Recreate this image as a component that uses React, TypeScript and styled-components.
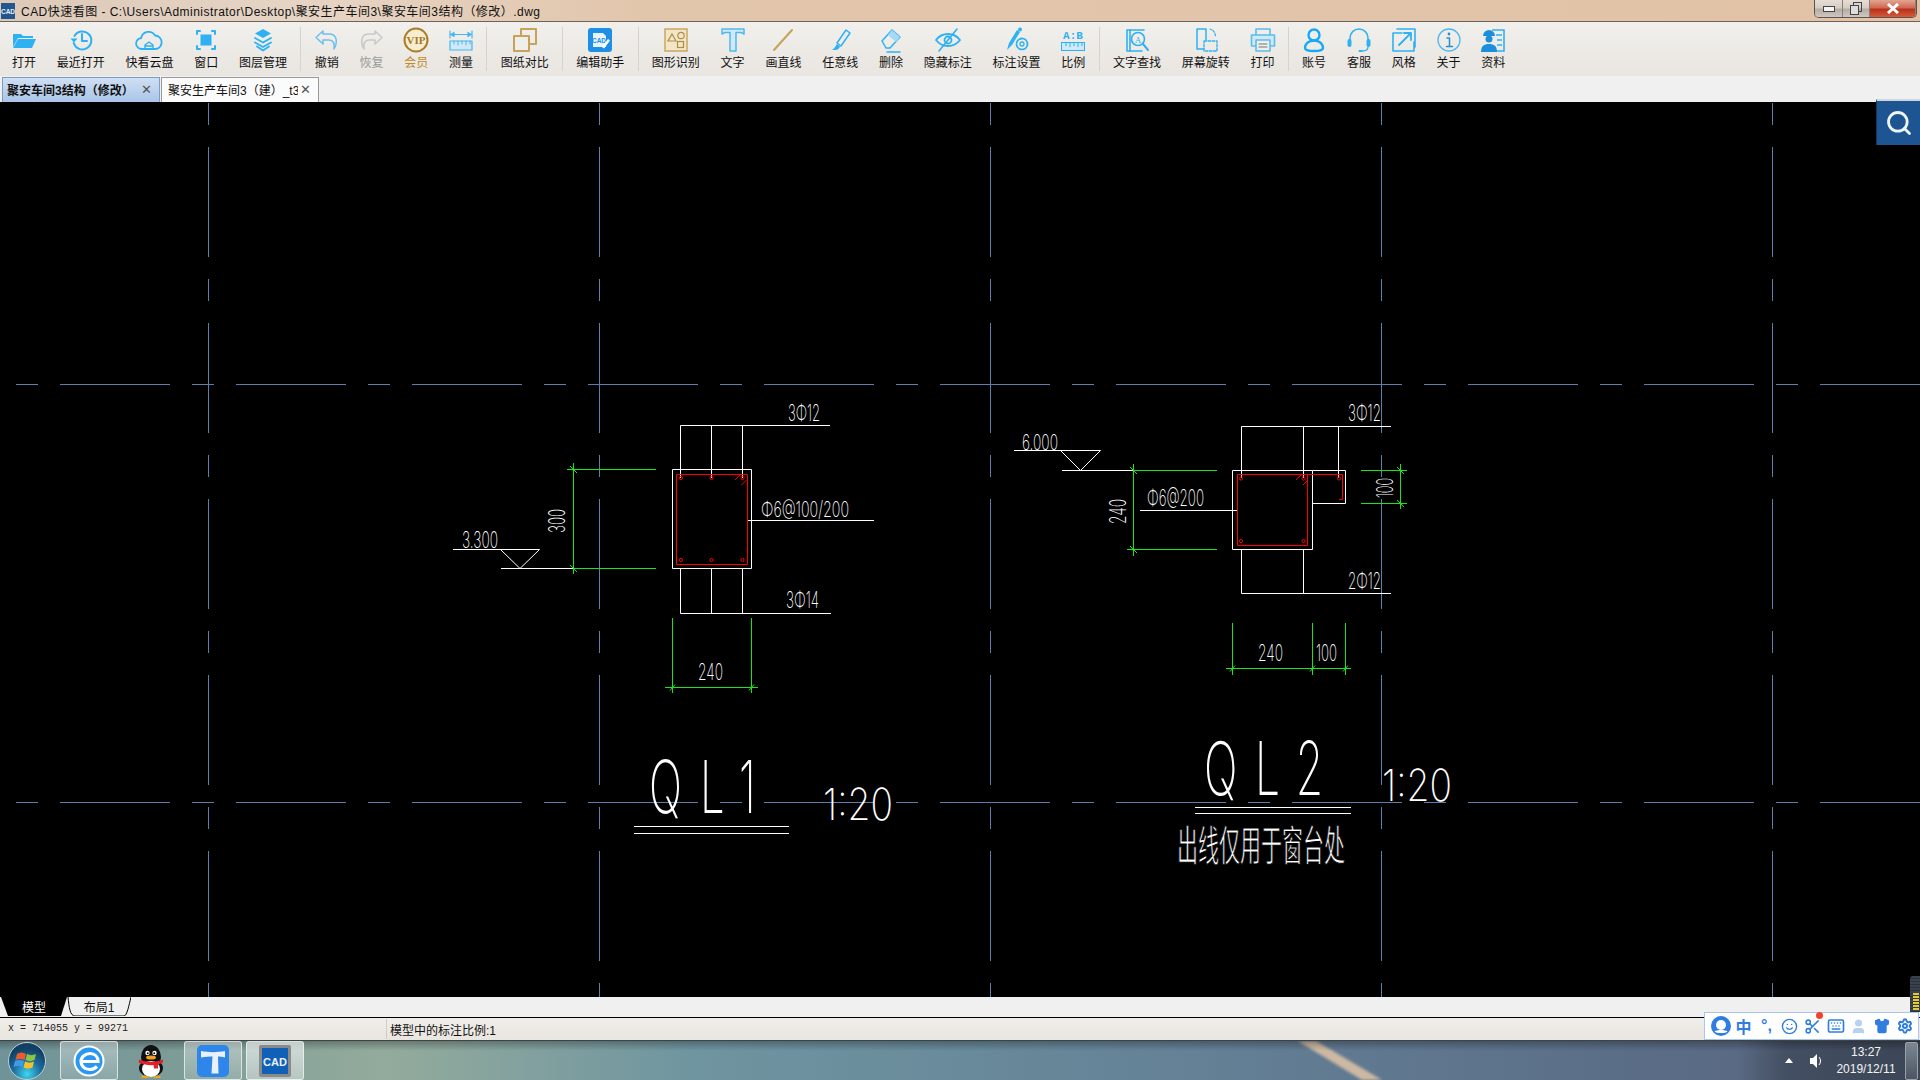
import React from "react";
import styled, { createGlobalStyle } from "styled-components";
import { Keyboard, Scissors, Search, Settings, Shirt, Smile, User } from "lucide-react";

const UI_FONT = `"Liberation Sans", "Noto Sans CJK SC", sans-serif`;
const BLUE = "#2db1f3";
const GOLD = "#c6a25a";

const Global = createGlobalStyle`
  html, body { margin: 0; padding: 0; background: #000; }
  * { box-sizing: border-box; }
`;

const Screen = styled.div`
  position: relative;
  width: 1920px;
  height: 1080px;
  overflow: hidden;
  display: flex;
  flex-direction: column;
  font-family: ${UI_FONT};
`;

const TitleBar = styled.header`
  height: 22px;
  flex: none;
  display: flex;
  align-items: flex-start;
  justify-content: space-between;
  border-bottom: 1px solid #6e635a;
  background: linear-gradient(90deg, #dcc9b8 0, #e6d4c4 300px, #e2c6ac 640px, #e1c2a7 100%);
`;
const TitleLeft = styled.div`
  display: flex;
  align-items: center;
  gap: 6px;
  height: 21px;
  padding-left: 1px;
  font-size: 12px;
  color: #111;
  white-space: nowrap;
`;
const TitleText = styled.span`
  letter-spacing: 0.47px;
`;
const WindowControls = styled.div`
  display: flex;
  height: 18px;
  margin-right: 3px;
  border: 1px solid #5d534c;
  border-top: none;
  border-radius: 0 0 5px 5px;
  overflow: hidden;
`;
const WinButton = styled.div<{ $w: number; $close?: boolean }>`
  width: ${(p) => p.$w}px;
  display: flex;
  align-items: center;
  justify-content: center;
  border-right: 1px solid #8b8078;
  background: ${(p) =>
    p.$close
      ? "linear-gradient(180deg,#e3a594 0,#cf6a52 45%,#b8321c 55%,#d65a3c 100%)"
      : "linear-gradient(180deg,#e8ddd4 0,#d8cdc4 45%,#b4aca6 55%,#cfc8c0 100%)"};
`;

const Toolbar = styled.nav`
  height: 54px;
  flex: none;
  display: flex;
  align-items: flex-start;
  padding: 4px 0 0 1.5px;
  background: linear-gradient(180deg, #f1f0ec 0, #e9e5e0 100%);
`;
const ToolButton = styled.div<{ $muted?: boolean; $gold?: boolean }>`
  display: flex;
  flex-direction: column;
  align-items: center;
  padding: 0 10.4px;
  font-size: 12px;
  line-height: 16px;
  white-space: nowrap;
  color: ${(p) => (p.$muted ? "#9a9a9a" : p.$gold ? "#c08a2c" : "#111")};
  svg { display: block; margin: 0 -3px 1px; }
`;
const ToolSep = styled.div`
  width: 1px;
  height: 44px;
  margin: 1px 2.9px 0;
  flex: none;
  background: #d6d3cf;
`;

const TabStrip = styled.div`
  height: 26px;
  flex: none;
  display: flex;
  align-items: flex-end;
  gap: 1px;
  padding-left: 2px;
  background: #f0f0f0;
`;
const DocTab = styled.div<{ $active?: boolean }>`
  width: 158px;
  height: 25px;
  display: flex;
  align-items: center;
  justify-content: space-between;
  padding: 0 7px 2px ${(p) => (p.$active ? 4 : 6)}px;
  font-size: 12px;
  font-weight: ${(p) => (p.$active ? 700 : 400)};
  color: #111;
  border: 1px solid ${(p) => (p.$active ? "#7b9cc6" : "#9a9a9a")};
  border-bottom: none;
  background: ${(p) => (p.$active ? "linear-gradient(180deg,#cfdff2,#a9c5e8)" : "#fbfbfb")};
`;
const DocTitle = styled.span`
  width: 130px;
  overflow: hidden;
  white-space: nowrap;
`;
const TabClose = styled.span`
  font-size: 13px;
  font-weight: 400;
  color: #555;
`;

const Canvas = styled.main`
  position: relative;
  flex: 1;
  min-height: 0;
  background: #000;
  svg.drawing { display: block; width: 1920px; height: 895px; }
`;
const SearchButton = styled.div`
  position: absolute;
  top: -3px;
  right: 0;
  width: 44px;
  height: 46px;
  display: flex;
  align-items: center;
  justify-content: center;
  border-top: 2px solid #cfd6dd;
  border-left: 1px solid #14355c;
  background: #1c5591;
  color: #eef4fa;
`;
const LevelMeter = styled.div`
  position: absolute;
  right: 0;
  bottom: -15px;
  width: 10px;
  height: 36px;
  border-radius: 3px 0 0 0;
  background: repeating-linear-gradient(180deg, #39424f 0 2px, #2a313c 2px 3px);
  &::after {
    content: "";
    position: absolute;
    left: 3px;
    right: 1px;
    bottom: 2px;
    height: 17px;
    background: repeating-linear-gradient(180deg, #e2c936 0 2px, #3a3a2a 2px 3px);
  }
`;
const CadLabel = styled.text<{ $weight?: number }>`
  fill: #fff;
  font-family: "Inter", "Noto Sans CJK SC", sans-serif;
  font-weight: ${(p) => p.$weight ?? 200};
`;
const CadHanzi = styled.text`
  fill: #fff;
  stroke: #000;
  stroke-width: 1px;
  font-family: "Noto Sans CJK SC", sans-serif;
`;

const LayoutStrip = styled.div`
  height: 21px;
  flex: none;
  display: flex;
  padding-left: 1px;
  background: #f0f0f0;
  border-bottom: 1px solid #000;
`;
const LayoutTab = styled.div<{ $w: number; $dark?: boolean }>`
  position: relative;
  width: ${(p) => p.$w}px;
  height: 19px;
  display: flex;
  align-items: center;
  justify-content: center;
  font-size: 12px;
  color: ${(p) => (p.$dark ? "#fff" : "#111")};
  svg { position: absolute; inset: 0; }
  span { position: relative; }
`;

const StatusBar = styled.footer`
  height: 22px;
  flex: none;
  display: flex;
  align-items: center;
  background: linear-gradient(180deg, #f0eeea, #e9e5e0);
`;
const Coords = styled.div`
  width: 387px;
  height: 20px;
  line-height: 20px;
  padding-left: 8px;
  border-right: 1px solid #cfccc8;
  font-family: "Liberation Mono", monospace;
  font-size: 10px;
  color: #222;
`;
const ScaleNote = styled.div`
  padding-left: 3px;
  font-size: 12px;
  color: #111;
`;

const Taskbar = styled.div`
  position: relative;
  height: 40px;
  flex: none;
  display: flex;
  align-items: stretch;
  border-top: 1px solid #3d4347;
  color: #fff;
`;
const Wallpaper = styled.svg`
  position: absolute;
  inset: 0;
  width: 100%;
  height: 100%;
`;
const StartOrb = styled.div`
  position: relative;
  width: 60px;
  display: flex;
  align-items: center;
  padding-left: 7px;
`;
const TaskItem = styled.div<{ $w: number; $state?: "plain" | "open" | "active" }>`
  position: relative;
  width: ${(p) => p.$w}px;
  margin-left: ${(p) => (p.$state === "active" ? 4 : 0)}px;
  display: flex;
  align-items: center;
  justify-content: center;
  border-radius: 3px;
  border: ${(p) => (p.$state && p.$state !== "plain" ? "1px solid rgba(235,245,245,.75)" : "none")};
  background: ${(p) =>
    p.$state === "active"
      ? "linear-gradient(180deg,rgba(255,255,255,.62),rgba(255,255,255,.38))"
      : p.$state === "open"
        ? "linear-gradient(180deg,rgba(255,255,255,.38),rgba(255,255,255,.14))"
        : "none"};
`;
const Tray = styled.div`
  position: relative;
  margin-left: auto;
  display: flex;
  align-items: center;
`;
const TrayArrow = styled.div`
  width: 0;
  height: 0;
  margin-right: 17px;
  border-left: 4px solid transparent;
  border-right: 4px solid transparent;
  border-bottom: 5px solid #fff;
`;
const Clock = styled.div`
  width: 72px;
  margin: 0 3px 0 8px;
  text-align: center;
  font-size: 12px;
  line-height: 17px;
  color: #f4f4f4;
`;
const ShowDesktop = styled.div`
  width: 13px;
  height: 38px;
  margin-right: 2px;
  border: 1px solid #9aa0a6;
  border-radius: 2px;
  background: linear-gradient(180deg, #7c8794, #4b5563);
`;
const ImeBar = styled.div`
  position: absolute;
  right: 1px;
  bottom: 40px;
  width: 215px;
  height: 28px;
  display: flex;
  align-items: center;
  padding-left: 4px;
  background: #fff;
  border: 1px solid #a9c6f0;
  color: #2f7de1;
`;
const ImeItem = styled.div<{ $light?: boolean }>`
  position: relative;
  width: 23px;
  display: flex;
  align-items: center;
  justify-content: center;
  font-size: 16px;
  font-weight: 700;
  color: ${(p) => (p.$light ? "#b9d2f3" : "#2f7de1")};
`;
const RedDot = styled.span`
  position: absolute;
  top: -6px;
  right: 1px;
  width: 7px;
  height: 7px;
  border-radius: 50%;
  background: #f4432c;
`;

/* ---------- toolbar icons ---------- */
const Ic: React.FC<{ children: React.ReactNode; c?: string }> = ({ children, c = BLUE }) => (
  <svg width="30" height="28" viewBox="0 0 30 28" fill="none" stroke={c} strokeWidth="1.6" strokeLinecap="round" strokeLinejoin="round">
    {children}
  </svg>
);

const icons: Record<string, React.ReactNode> = {
  open: (
    <Ic>
      <path d="M4 21V8h8l2 2h10v2H9z" fill={BLUE} stroke="none" />
      <path d="M9 13h18l-4 9H4z" fill={BLUE} stroke="none" />
    </Ic>
  ),
  recent: (
    <Ic>
      <path d="M8.5 10a9 9 0 1 1-.8 7" strokeWidth="2" />
      <path d="M4.5 12.5h7l-3.5 4z" fill={BLUE} stroke="none" />
      <path d="M16 8v7h5" strokeWidth="2" />
    </Ic>
  ),
  cloud: (
    <Ic>
      <path d="M8 23a5.500 5.500 0 0 1-.8-11A7.500 7.500 0 0 1 21 9.500 6.800 6.800 0 0 1 22 23z" strokeWidth="1.8" />
      <path d="M11 23v-4l4-3 4 3v4M11 20h8" strokeWidth="1.4" />
    </Ic>
  ),
  window: (
    <Ic>
      <rect x="9.500" y="8.500" width="11" height="11" fill={BLUE} stroke="none" />
      <path d="M6 8V5h3M21 5h3v3M24 20v3h-3M9 23H6v-3" strokeWidth="2" />
    </Ic>
  ),
  layers: (
    <Ic>
      <path d="M15 3l8 4.500-8 4.500-8-4.500z" fill={BLUE} stroke="none" />
      <path d="M7 12l8 4.500 8-4.500M7 16.500l8 4.500 8-4.500M9 20.500l6 4 6-4" strokeWidth="1.8" />
    </Ic>
  ),
  undo: (
    <Ic c="#6cc0ee">
      <path d="M11 5L4 11.500l7 6.500v-4h6c4 0 6 3 5 9 4-7 3-15-5-15h-6z" strokeWidth="1.5" />
    </Ic>
  ),
  redo: (
    <Ic c="#c8c8c8">
      <path d="M19 5l7 6.500-7 6.500v-4h-6c-4 0-6 3-5 9-4-7-3-15 5-15h6z" strokeWidth="1.5" />
    </Ic>
  ),
  vip: (
    <svg width="30" height="28" viewBox="0 0 30 28">
      <circle cx="15" cy="14" r="11.500" fill="#f7eed2" stroke="#ab7d27" strokeWidth="2" />
      <text x="15" y="18" textAnchor="middle" fontFamily="Liberation Serif, serif" fontWeight="700" fontSize="11" fill="#a9782a">
        VIP
      </text>
    </svg>
  ),
  measure: (
    <Ic c="#46b6f0">
      <path d="M4 5v7M26 5v7M5 8.500h20M5 8.500l3-2v4zM25 8.500l-3-2v4z" strokeWidth="1.2" />
      <rect x="4" y="15" width="22" height="9" strokeWidth="1.2" fill="#cfe9f8" />
      <path d="M8 15v3M12 15v4M16 15v3M20 15v4M24 15v3" strokeWidth="1" />
    </Ic>
  ),
  compare: (
    <Ic c={GOLD}>
      <rect x="11" y="3" width="15" height="15" strokeWidth="2" />
      <rect x="4" y="10" width="15" height="15" strokeWidth="2" fill="#f0eeea" />
    </Ic>
  ),
  editor: (
    <svg width="30" height="28" viewBox="0 0 30 28">
      <rect x="3" y="2" width="24" height="24" rx="3" fill="#1e8fe6" />
      <path d="M8 7h10l3 3v11H8z" fill="#e8f4fd" />
      <text x="14" y="17" textAnchor="middle" fontFamily="Liberation Sans, sans-serif" fontSize="6.500" fontWeight="700" fill="#1e8fe6">
        CAD
      </text>
      <path d="M17 21l6-8 2 1.500-6 8z" fill="#fff" />
    </svg>
  ),
  shapes: (
    <svg width="30" height="28" viewBox="0 0 30 28" fill="none" stroke="#b08c46" strokeWidth="1.2">
      <rect x="4" y="3" width="22" height="22" fill="#f2e6c8" stroke="#c9a85f" strokeWidth="1.500" />
      <path d="M11 8l4 7H7z" />
      <circle cx="20" cy="9.500" r="3.200" />
      <rect x="16.500" y="15.500" width="6" height="6" />
    </svg>
  ),
  text: (
    <Ic c="#4fb9ee">
      <path d="M4 3h22v5l-3-1.500h-5V25h-6V6.500H7L4 8z" strokeWidth="1.500" fill="#cfe9f8" />
    </Ic>
  ),
  line: (
    <Ic c={GOLD}>
      <path d="M6 24L24 4" strokeWidth="2" />
    </Ic>
  ),
  pen: (
    <Ic>
      <path d="M12 17l9-13 4 3-9 13z" strokeWidth="1.500" />
      <path d="M12 18l3 2.500c-1 3-4 4-8 3.500 2-1 3-3 5-6z" fill={BLUE} stroke="none" />
    </Ic>
  ),
  eraser: (
    <Ic>
      <path d="M6 15L16 4l8 7-10 11H10z" strokeWidth="1.500" />
      <path d="M12 9l8 7 4-5-8-7z" fill="#a5d9f6" stroke="none" />
      <path d="M11 26h13" strokeWidth="1.500" />
    </Ic>
  ),
  hide: (
    <Ic>
      <path d="M3 14c6-8 18-8 24 0-6 8-18 8-24 0z" strokeWidth="1.800" />
      <circle cx="15" cy="14" r="3.500" strokeWidth="1.800" />
      <path d="M6 25L24 3" strokeWidth="1.600" />
    </Ic>
  ),
  markset: (
    <Ic>
      <path d="M5 24l2-7 8-13 3 2-8 13z" fill={BLUE} stroke="none" />
      <circle cx="18" cy="3.500" r="2" fill={BLUE} stroke="none" />
      <circle cx="20" cy="18" r="5.500" strokeWidth="1.800" strokeDasharray="3 1.500" />
      <circle cx="20" cy="18" r="2" strokeWidth="1.300" />
    </Ic>
  ),
  ratio: (
    <svg width="30" height="28" viewBox="0 0 30 28" fill="none">
      <text x="15" y="13" textAnchor="middle" fontFamily="Liberation Mono, monospace" fontWeight="700" fontSize="11" fill={BLUE}>
        A:B
      </text>
      <rect x="3.500" y="16.500" width="23" height="8" stroke={BLUE} fill="#cfe9f8" />
      <path d="M8 17v3M12 17v4M16 17v3M20 17v4M24 17v3" stroke={BLUE} />
    </svg>
  ),
  findtext: (
    <Ic>
      <path d="M22 4H5v21h15" strokeWidth="1.600" />
      <path d="M8 4v21" strokeWidth="1.600" />
      <circle cx="16" cy="13" r="6.500" strokeWidth="1.600" />
      <path d="M21 18l5 6" strokeWidth="2" />
      <text x="16" y="16.500" textAnchor="middle" fontFamily="Liberation Serif, serif" fontSize="9" fill={BLUE} stroke="none">
        A
      </text>
    </Ic>
  ),
  rotate: (
    <Ic>
      <path d="M15 14V3H6v20h7" strokeWidth="1.500" />
      <path d="M13 15h13v10H13z" strokeWidth="1.300" strokeDasharray="2.500 1.500" />
      <path d="M19 3c3 1 5 3 5.500 7" strokeWidth="1.200" strokeDasharray="2 1.500" />
    </Ic>
  ),
  print: (
    <Ic c="#5bbcee">
      <path d="M8 9V3h14v6" strokeWidth="1.600" />
      <path d="M8 20H3.500V9h23v11H22" strokeWidth="1.600" fill="#cfe9f8" />
      <rect x="8" y="14" width="14" height="11" fill="#f0eeea" strokeWidth="1.600" />
      <path d="M11 18h8M11 21h8" strokeWidth="1.200" stroke="#777" />
    </Ic>
  ),
  account: (
    <Ic c="#16a9f7">
      <circle cx="15" cy="9" r="5.500" strokeWidth="2.400" />
      <path d="M15 14.500c-6 0-9 4-9 7.500 0 2 2 3 9 3s9-1 9-3c0-3.500-3-7.500-9-7.500z" strokeWidth="2.400" />
    </Ic>
  ),
  support: (
    <Ic>
      <path d="M6 14v-2a9 9 0 0 1 18 0v2" strokeWidth="1.500" />
      <rect x="3.500" y="13" width="4" height="8" rx="2" fill={BLUE} stroke="none" />
      <rect x="22.500" y="13" width="4" height="8" rx="2" fill={BLUE} stroke="none" />
      <path d="M24 21c0 3-3 4-6 4" strokeWidth="1.300" />
      <rect x="14.500" y="24" width="4" height="2" rx="1" fill={BLUE} stroke="none" />
    </Ic>
  ),
  style: (
    <Ic>
      <path d="M4 7h9M4 7v18h21v-9M8 3h18v18" strokeWidth="1.600" />
      <path d="M10 19L22 7M15 7h7v7" strokeWidth="1.800" />
    </Ic>
  ),
  about: (
    <Ic c="#4fb9ee">
      <circle cx="15" cy="14" r="11" strokeWidth="1.300" />
      <circle cx="15" cy="8" r="1.400" fill="#2a8fd0" stroke="none" />
      <path d="M13 12h2.500v8M12.500 20.500h6" strokeWidth="1.500" stroke="#2a8fd0" />
    </Ic>
  ),
  docs: (
    <svg width="30" height="28" viewBox="0 0 30 28" fill="none">
      <path d="M14 4h12v21H16" stroke={BLUE} strokeWidth="1.600" />
      <path d="M18 9h6M19 14h5M19 19h5" stroke={BLUE} strokeWidth="1.500" />
      <path d="M5 10a6 6 0 0 1 12 0z" fill="#1c8fdc" />
      <circle cx="11" cy="13" r="3.500" fill="#1c8fdc" />
      <path d="M3 26c0-6 3-8 8-8s8 2 8 8z" fill="#1c8fdc" />
    </svg>
  ),
};

type ToolDef = { id: string; label: string; muted?: boolean; gold?: boolean } | "sep";
const tools: ToolDef[] = [
  { id: "open", label: "打开" },
  { id: "recent", label: "最近打开" },
  { id: "cloud", label: "快看云盘" },
  { id: "window", label: "窗口" },
  { id: "layers", label: "图层管理" },
  "sep",
  { id: "undo", label: "撤销" },
  { id: "redo", label: "恢复", muted: true },
  { id: "vip", label: "会员", gold: true },
  { id: "measure", label: "测量" },
  "sep",
  { id: "compare", label: "图纸对比" },
  "sep",
  { id: "editor", label: "编辑助手" },
  "sep",
  { id: "shapes", label: "图形识别" },
  { id: "text", label: "文字" },
  { id: "line", label: "画直线" },
  { id: "pen", label: "任意线" },
  { id: "eraser", label: "删除" },
  { id: "hide", label: "隐藏标注" },
  { id: "markset", label: "标注设置" },
  { id: "ratio", label: "比例" },
  "sep",
  { id: "findtext", label: "文字查找" },
  { id: "rotate", label: "屏幕旋转" },
  { id: "print", label: "打印" },
  "sep",
  { id: "account", label: "账号" },
  { id: "support", label: "客服" },
  { id: "style", label: "风格" },
  { id: "about", label: "关于" },
  { id: "docs", label: "资料" },
];

/* ---------- CAD drawing ---------- */
const CAP = 0.727;
const Cad: React.FC<{ x0: number; x1: number; top: number; bottom: number; weight?: number; children: string }> = ({ x0, x1, top, bottom, weight, children }) => (
  <CadLabel x={x0} y={bottom} $weight={weight} fontSize={(bottom - top) / CAP} textLength={x1 - x0} lengthAdjust="spacingAndGlyphs">
    {children}
  </CadLabel>
);
const CadUp: React.FC<{ left: number; right: number; top: number; bottom: number; children: string }> = ({ left, right, top, bottom, children }) => (
  <CadLabel
    x={right}
    y={bottom}
    transform={`rotate(-90 ${right} ${bottom})`}
    fontSize={(right - left) / CAP}
    textLength={bottom - top}
    lengthAdjust="spacingAndGlyphs"
  >
    {children}
  </CadLabel>
);
const CadTitle: React.FC<{ x: number; y: number; size: number; xs: string; children: string }> = ({ x, y, size, xs, children }) => (
  <CadLabel $weight={200} transform={`translate(${x} ${y}) scale(.6 1)`} x={xs} y={0} fontSize={size}>
    {children}
  </CadLabel>
);

const WHITE_PATH = `
M672.5 469.5H751.5V568.5H672.5Z M680.5 478V425.5H830 M711.5 425.5V478 M742.5 425.5V478
M680.5 568V613.5H831 M711.5 568V613.5 M742.5 568V613.5 M747 520.5H874
M453 549.5H539.5L520 568.5L500.5 549.5 M501 568.5H573
M1232.5 470.5H1312.5V549.5H1232.5Z M1312.5 470.5H1345.5V503.5H1312.5
M1241.5 478V426.5H1391 M1303.5 426.5V478 M1338.5 426.5V478
M1241.5 549V593.5H1391 M1303.5 549V593.5 M1140 510.5H1237
M1014 450.5H1100.5L1080.5 470.5L1060.5 450.5 M1062 470.5H1133
M634 826.5H789 M634 833.5H789 M1195 807.5H1351 M1195 813.5H1351`;
const GREEN_PATH = `
M573.5 463V574 M567 469.5H656 M573 568.5H656 M672.5 618V693 M751.5 618V693 M665 687.5H758
M570 466L577 473 M570 565L577 572 M670 690.5L675 684.5 M749 690.5L754 684.5
M1133.5 464V556 M1133 470.5H1217 M1127 549.5H1217 M1400.5 464V509 M1361 470.5H1407 M1361 503.5H1407
M1232.5 623V675 M1312.5 623V675 M1345.5 623V675 M1226 668.5H1351
M1130 467L1137 474 M1130 546L1137 553 M1397 467L1404 474 M1397 500L1404 507
M1230 671.5L1235 665.5 M1310 671.5L1315 665.5 M1343 671.5L1348 665.5`;
const RED_PATH = `
M676.5 474.5H747.5V564.5H676.5Z M735 480L740 475 M741.5 485L746.5 480
M1237.5 474.5H1307.5V545.5H1237.5Z M1307.5 474.5H1342.5V499.5H1339 M1296 480L1301 475 M1303 485L1308 480`;
const BARS: [number, number][] = [
  [681, 478], [711.5, 478], [742.5, 478], [681, 560], [711.5, 560], [742.5, 560],
  [1241, 478.5], [1303.5, 478.5], [1339, 478.5], [1241, 541], [1303.5, 541],
];

const Drawing: React.FC = () => (
  <svg className="drawing" viewBox="0 102 1920 895">
    <g stroke="#5b80ae" strokeWidth="1" strokeDasharray="22 22 110 22" shapeRendering="crispEdges">
      {[208.5, 599.5, 990.5, 1381.5, 1772.5].map((x) => (
        <line key={x} x1={x} y1={103} x2={x} y2={997} />
      ))}
      {[384.5, 802.5].map((y) => (
        <line key={y} x1={16} y1={y} x2={1920} y2={y} />
      ))}
    </g>
    <path d={GREEN_PATH} stroke="#19e619" fill="none" />
    <path d={WHITE_PATH} stroke="#fff" fill="none" />
    <path d={RED_PATH} stroke="#ff0000" fill="none" />
    {BARS.map(([x, y]) => (
      <circle key={`${x}-${y}`} cx={x} cy={y} r="1.600" stroke="#ff0000" fill="none" />
    ))}

    <Cad x0={788} x1={820} top={404} bottom={421}>3Φ12</Cad>
    <Cad x0={761} x1={849} top={501} bottom={517}>Φ6@100/200</Cad>
    <Cad x0={786} x1={819} top={591} bottom={608}>3Φ14</Cad>
    <Cad x0={462} x1={498} top={531} bottom={548}>3.300</Cad>
    <Cad x0={698} x1={723} top={663} bottom={680}>240</Cad>
    <CadUp left={548} right={565} top={509} bottom={533}>300</CadUp>

    <Cad x0={1348} x1={1381} top={404} bottom={421}>3Φ12</Cad>
    <Cad x0={1348} x1={1381} top={572} bottom={589}>2Φ12</Cad>
    <Cad x0={1147} x1={1204} top={489} bottom={506}>Φ6@200</Cad>
    <Cad x0={1022} x1={1058} top={434} bottom={450}>6.000</Cad>
    <Cad x0={1258} x1={1283} top={644} bottom={661}>240</Cad>
    <Cad x0={1316} x1={1337} top={644} bottom={661}>100</Cad>
    <CadUp left={1109} right={1126} top={499} bottom={524}>240</CadUp>
    <CadUp left={1376} right={1393} top={478} bottom={498}>100</CadUp>

    <CadTitle x={649} y={813} size={73} xs="0 85 150">QL1</CadTitle>
    <Cad x0={823} x1={893} top={788} bottom={820} weight={200}>1:20</Cad>

    <CadTitle x={1204} y={795} size={74} xs="0 85 153">QL2</CadTitle>
    <Cad x0={1382} x1={1452} top={769} bottom={801} weight={200}>1:20</Cad>

    <CadHanzi x={1177} y={861} fontSize={42} textLength={168} lengthAdjust="spacingAndGlyphs">出线仅用于窗台处</CadHanzi>
  </svg>
);

/* ---------- logos ---------- */
const AppMark = () => (
  <svg width="14" height="16" viewBox="0 0 14 16">
    <rect width="14" height="16" fill="#23568f" />
    <text x="7" y="11" textAnchor="middle" fontFamily="Liberation Sans, sans-serif" fontSize="6.500" fontWeight="700" fill="#e8f0f8">CAD</text>
  </svg>
);
const WinOrb = () => (
  <svg width="40" height="40" viewBox="0 0 40 40">
    <defs>
      <radialGradient id="orb" cx="50%" cy="85%" r="70%">
        <stop offset="0" stopColor="#3fd6ee" />
        <stop offset=".55" stopColor="#1b6a9c" />
        <stop offset="1" stopColor="#123f63" />
      </radialGradient>
    </defs>
    <circle cx="20" cy="20" r="18.500" fill="url(#orb)" stroke="#b8d0da" strokeWidth="1" />
    <path d="M10 13c3-2 6-2 9 0l-1.500 6c-3-1.500-6-1.500-9 0z" fill="#ec5b2b" />
    <path d="M20 13c3 1.500 6 1.500 9 0l-1.500 6c-3 1.500-6 1.500-9 0z" fill="#8cc63f" />
    <path d="M8 20c3-1.500 6-1.500 9 0l-1.500 6c-3-1.500-6-1.500-9 0z" fill="#3f9be8" />
    <path d="M18 20.500c3 1.500 6 1.500 9 0l-1.500 6c-3 1.500-6 1.500-9 0z" fill="#f6c02c" />
  </svg>
);
const IeLogo = () => (
  <svg width="32" height="32" viewBox="0 0 32 32" fill="none">
    <circle cx="16" cy="16" r="15.500" fill="#fff" />
    <circle cx="16" cy="16" r="13.500" fill="#2a98f2" />
    <path d="M8 16.500h17c0-5-3.500-8-8-8s-9 3.500-9 8 3.500 8 8.500 8c3 0 5.500-1 7.500-3" stroke="#fff" strokeWidth="3.200" />
  </svg>
);
const QqLogo = () => (
  <svg width="28" height="34" viewBox="0 0 28 34">
    <ellipse cx="14" cy="13" rx="10" ry="12" fill="#111" />
    <ellipse cx="14" cy="24" rx="12" ry="9" fill="#111" />
    <ellipse cx="14" cy="25" rx="9" ry="8" fill="#fff" />
    <circle cx="10.500" cy="9" r="2.200" fill="#fff" />
    <circle cx="17.500" cy="9" r="2.200" fill="#fff" />
    <circle cx="10.800" cy="9.300" r="1" fill="#111" />
    <circle cx="17.200" cy="9.300" r="1" fill="#111" />
    <ellipse cx="14" cy="13.500" rx="5" ry="2" fill="#f3a31b" />
    <path d="M2 15.500c7 3 17 3 24 0v3c-2 1-4 1.500-5 2v4h-4l-.5-3.500c-4 .5-9 0-15-2.500z" fill="#e2202a" />
    <ellipse cx="8" cy="33" rx="4" ry="1.200" fill="#f3a31b" />
    <ellipse cx="20" cy="33" rx="4" ry="1.200" fill="#f3a31b" />
  </svg>
);
const TLogo = () => (
  <svg width="32" height="32" viewBox="0 0 32 32">
    <rect width="32" height="32" rx="5" fill="#2f86ea" />
    <path d="M4 6c7 1.500 17 1.500 24 0v6.500c-3-.8-5-1-7-1l.5 17h-7l1-17c-3 0-7 .3-11.500 1z" fill="#e8f1fb" />
  </svg>
);
const CadLogo = () => (
  <svg width="32" height="32" viewBox="0 0 32 32">
    <rect width="32" height="32" rx="2" fill="#8a8a8a" />
    <rect x="3" y="3" width="26" height="26" fill="#1160b8" />
    <text x="16" y="21" textAnchor="middle" fontFamily="Liberation Sans, sans-serif" fontSize="11" fontWeight="700" fill="#e8f0f8">CAD</text>
  </svg>
);

export default function App() {
  return (
    <Screen>
      <Global />
      <TitleBar>
        <TitleLeft>
          <AppMark />
          <TitleText>CAD快速看图 - C:\Users\Administrator\Desktop\聚安生产车间3\聚安车间3结构（修改）.dwg</TitleText>
        </TitleLeft>
        <WindowControls>
          <WinButton $w={28}>
            <svg width="12" height="6"><rect x=".5" y=".5" width="11" height="5" fill="#f4f4f4" stroke="#444" /></svg>
          </WinButton>
          <WinButton $w={27}>
            <svg width="12" height="13" fill="none" stroke="#444"><rect x="3.500" y=".5" width="8" height="9" /><rect x=".5" y="3.500" width="8" height="9" fill="#ddd" /></svg>
          </WinButton>
          <WinButton $w={46} $close>
            <svg width="14" height="11" stroke="#fff" strokeWidth="3"><path d="M2 1l10 9M12 1L2 10" /></svg>
          </WinButton>
        </WindowControls>
      </TitleBar>

      <Toolbar>
        {tools.map((t, i) =>
          t === "sep" ? (
            <ToolSep key={i} />
          ) : (
            <ToolButton key={t.id} $muted={t.muted} $gold={t.gold}>
              {icons[t.id]}
              {t.label}
            </ToolButton>
          ),
        )}
      </Toolbar>

      <TabStrip>
        <DocTab $active>
          <DocTitle>聚安车间3结构（修改）</DocTitle>
          <TabClose>✕</TabClose>
        </DocTab>
        <DocTab>
          <DocTitle>聚安生产车间3（建）_t3</DocTitle>
          <TabClose>✕</TabClose>
        </DocTab>
      </TabStrip>

      <Canvas>
        <Drawing />
        <SearchButton>
          <Search size={28} strokeWidth={2.4} />
        </SearchButton>
        <LevelMeter />
      </Canvas>

      <LayoutStrip>
        <LayoutTab $w={66} $dark>
          <svg width="66" height="19"><path d="M0 0H66L60 19H7z" fill="#000" /></svg>
          <span>模型</span>
        </LayoutTab>
        <LayoutTab $w={64}>
          <svg width="64" height="19" fill="none" stroke="#000"><path d="M1 0C2 10 3 19 8 19H57C60 19 62 8 64 0" /></svg>
          <span>布局1</span>
        </LayoutTab>
      </LayoutStrip>

      <StatusBar>
        <Coords>x = 714055 y = 99271</Coords>
        <ScaleNote>模型中的标注比例:1</ScaleNote>
      </StatusBar>

      <Taskbar>
        <Wallpaper viewBox="0 0 1920 40" preserveAspectRatio="none">
          <defs>
            <linearGradient id="wall" x1="0" x2="1" y1="0" y2="0">
              <stop offset="0" stopColor="#6f9398" />
              <stop offset=".09" stopColor="#7d9c98" />
              <stop offset=".2" stopColor="#93ab9c" />
              <stop offset=".36" stopColor="#6f95a0" />
              <stop offset=".62" stopColor="#648196" />
              <stop offset=".86" stopColor="#5a6c86" />
              <stop offset=".905" stopColor="#5a6a84" />
              <stop offset=".93" stopColor="#434f62" />
              <stop offset="1" stopColor="#3a4556" />
            </linearGradient>
            <linearGradient id="shade" x1="0" x2="0" y1="0" y2="1">
              <stop offset="0" stopColor="#000" stopOpacity=".28" />
              <stop offset=".25" stopColor="#000" stopOpacity="0" />
            </linearGradient>
            <filter id="soft"><feGaussianBlur stdDeviation="1.500" /></filter>
          </defs>
          <rect width="1920" height="40" fill="url(#wall)" />
          <path d="M1298 0h18l66 40h-20z" fill="#e8c9a8" opacity=".8" filter="url(#soft)" />
          <rect width="1920" height="40" fill="url(#shade)" />
        </Wallpaper>
        <StartOrb><WinOrb /></StartOrb>
        <TaskItem $w={58} $state="open"><IeLogo /></TaskItem>
        <TaskItem $w={66}><QqLogo /></TaskItem>
        <TaskItem $w={58} $state="open"><TLogo /></TaskItem>
        <TaskItem $w={58} $state="active"><CadLogo /></TaskItem>
        <Tray>
          <TrayArrow />
          <svg width="12" height="16" viewBox="0 0 12 16" fill="#fff">
            <path d="M0 5h3l4-4v14l-4-4H0z" />
            <path d="M9 4c2 2.500 2 5.500 0 8" fill="none" stroke="#fff" />
          </svg>
          <Clock>13:27<br />2019/12/11</Clock>
          <ShowDesktop />
        </Tray>
      </Taskbar>

      <ImeBar>
        <ImeItem>
          <svg width="20" height="20" viewBox="0 0 20 20">
            <circle cx="10" cy="10" r="10" fill="#2f7de1" />
            <circle cx="10" cy="9" r="5" fill="#fff" />
            <path d="M3.500 15.500c2-2 11-2 13 0-2 2-11 2-13 0z" fill="#fff" />
          </svg>
        </ImeItem>
        <ImeItem>中</ImeItem>
        <ImeItem>°,</ImeItem>
        <ImeItem><Smile size={17} strokeWidth={2} /></ImeItem>
        <ImeItem><Scissors size={17} strokeWidth={2.2} /><RedDot /></ImeItem>
        <ImeItem><Keyboard size={18} strokeWidth={2.2} /></ImeItem>
        <ImeItem $light><User size={17} fill="#b9d2f3" /></ImeItem>
        <ImeItem><Shirt size={16} fill="#2f7de1" /></ImeItem>
        <ImeItem><Settings size={16} strokeWidth={3} /></ImeItem>
      </ImeBar>
    </Screen>
  );
}
